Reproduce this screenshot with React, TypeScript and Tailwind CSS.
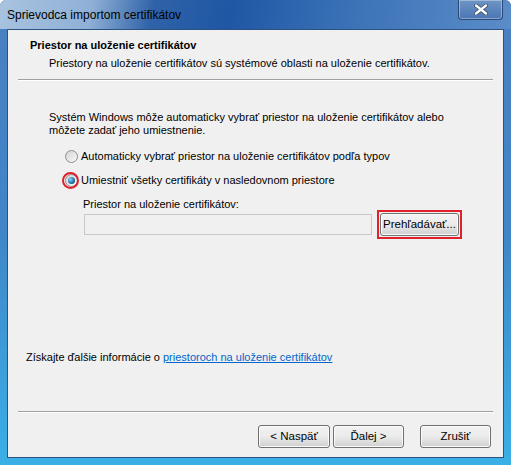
import React from "react";

const FONT = { fontFamily: '"Liberation Sans", Arial, sans-serif' };

function Radio({ checked }: { checked?: boolean }) {
  return (
    <span className="relative flex h-[13px] w-[13px] shrink-0 items-center justify-center rounded-full border border-[#8e8f8f] bg-gradient-to-br from-[#d4d4d4] to-[#f8f8f8]">
      {checked && (
        <span className="h-[7px] w-[7px] rounded-full bg-[radial-gradient(circle_at_35%_35%,#8fd3f5,#1a6fa8_60%,#0d3f66)]" />
      )}
    </span>
  );
}

function Btn({ children, w = "w-[72px]" }: { children: React.ReactNode; w?: string }) {
  return (
    <button className={`${w} h-[23px] rounded-[3px] border border-[#707070] bg-gradient-to-b from-[#f2f2f2] via-[#ebebeb] to-[#cfcfcf] text-[11.5px] text-black shadow-[inset_0_0_0_1px_#fcfcfc]`}>
      {children}
    </button>
  );
}

export default function App() {
  return (
    <div
      className="flex h-[465px] w-[511px] flex-col rounded-t-[6px] bg-gradient-to-b from-[#4a7fbf] via-[#3f86c9] to-[#3ab0e6]"
      style={FONT}
    >
      {/* Title bar */}
      <div className="flex h-[29px] items-start rounded-t-[6px] bg-[linear-gradient(100deg,#a9c3df_0%,#8fb0d6_18%,#2f62a8_30%,#1f57a5_45%,#3d74b8_70%,#5a8cc8_100%)]">
        <span className="ml-[7px] mt-[6px] text-[12px] text-black">Sprievodca importom certifikátov</span>
        <div className="flex-1" />
        <div className="mr-[8px] flex h-[20px] w-[45px] items-center justify-center rounded-b-[4px] border border-t-0 border-[#2c4a78] bg-gradient-to-b from-[#6f95c6] to-[#4a76b3] shadow-[inset_0_0_0_1px_rgba(255,255,255,0.35)]">
          <svg width="14" height="11" viewBox="0 0 14 11">
            <path d="M2 1.5 L12 9.5 M12 1.5 L2 9.5" stroke="#3a4a60" strokeWidth="4" strokeLinecap="round" />
            <path d="M2 1.5 L12 9.5 M12 1.5 L2 9.5" stroke="#ffffff" strokeWidth="2.4" strokeLinecap="round" />
          </svg>
        </div>
      </div>

      {/* Client area */}
      <div className="mb-[7px] ml-[7px] mr-[7px] flex flex-1 flex-col border border-[#2c5282] bg-[#f0f0f0] text-[11px] leading-[15px] text-black">
        {/* Header */}
        <div className="px-[22px] pt-[8px]">
          <div className="font-bold">Priestor na uloženie certifikátov</div>
          <div className="mt-[3px] pl-[19px]">
            Priestory na uloženie certifikátov sú systémové oblasti na uloženie certifikátov.
          </div>
        </div>
        <div className="mx-[10px] mt-[8px] h-px bg-[#a0a0a0] shadow-[0_1px_0_#ffffff]" />

        {/* Body */}
        <div className="px-[41px] pt-[31px]">
          <div className="leading-[13px]">
            Systém Windows môže automaticky vybrať priestor na uloženie certifikátov alebo
            <br />
            môžete zadať jeho umiestnenie.
          </div>
          <div className="mt-[12px] flex items-center gap-[3px] pl-[16px]">
            <Radio />
            <span>Automaticky vybrať priestor na uloženie certifikátov podľa typov</span>
          </div>
          <div className="relative mt-[9px] flex items-center gap-[3px] pl-[16px]">
            <Radio checked />
            <span>Umiestniť všetky certifikáty v nasledovnom priestore</span>
            <span className="absolute left-[13px] top-[-1px] h-[17px] w-[17px] rounded-full border-[2.5px] border-[#e0202a]" />
          </div>
          <div className="mt-[9px] pl-[34px]">Priestor na uloženie certifikátov:</div>
          <div className="-mt-[2px] flex items-center pl-[35px]">
            <div className="h-[21px] w-[294px] border border-[#c8c8c8] bg-[#f0f0f0]" />
            <div className="ml-[5px] border-[2.5px] border-[#e0202a] p-px">
              <Btn w="w-[79px]">Prehľadávať...</Btn>
            </div>
          </div>
        </div>

        <div className="flex-1" />

        <div className="px-[18px] pb-[46px]">
          Získajte ďalšie informácie o{" "}
          <span className="text-[#0066cc] underline">priestoroch na uloženie certifikátov</span>
        </div>

        <div className="mx-[10px] h-px bg-[#a0a0a0] shadow-[0_1px_0_#ffffff]" />
        <div className="flex justify-end gap-[3px] pb-[9px] pr-[12px] pt-[13px]">
          <Btn>&lt; Naspäť</Btn>
          <Btn w="w-[71px]">Ďalej &gt;</Btn>
          <div className="w-[10px]" />
          <Btn w="w-[71px]">Zrušiť</Btn>
        </div>
      </div>
    </div>
  );
}
